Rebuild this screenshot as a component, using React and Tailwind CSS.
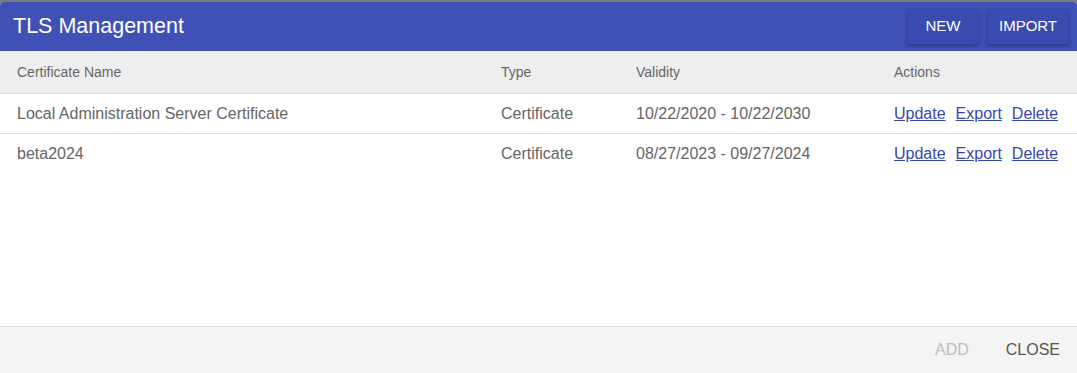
const rows = [
  { name: "Local Administration Server Certificate", type: "Certificate", validity: "10/22/2020 - 10/22/2030" },
  { name: "beta2024", type: "Certificate", validity: "08/27/2023 - 09/27/2024" },
];

function Row({ children, className = "" }) {
  return (
    <div className={`grid grid-cols-[484px_135px_258px_1fr] pl-[17px] items-center ${className}`}>
      {children}
    </div>
  );
}

export default function App() {
  return (
    <div className="h-[373px] w-[1077px] bg-[#7a7a7a] pt-[2px] font-['Liberation_Sans',Arial,sans-serif] overflow-hidden">
      <div className="flex h-[371px] flex-col rounded-t-[4px] bg-white overflow-hidden">
        <div className="flex h-[49px] items-center justify-between bg-[#3f51b5] pl-[13px] pr-[8px] shadow-[0_1px_2px_rgba(0,0,0,0.25)]">
          <h1 className="text-[21.5px] text-white">TLS Management</h1>
          <div className="flex gap-2">
            <button className="h-[35px] w-[72px] rounded-[4px] bg-[#3a4bb0] text-[15px] text-white shadow-[0_2px_4px_rgba(0,0,0,0.3)]">
              NEW
            </button>
            <button className="h-[35px] w-[82px] rounded-[4px] bg-[#3a4bb0] text-[15px] text-white shadow-[0_2px_4px_rgba(0,0,0,0.3)]">
              IMPORT
            </button>
          </div>
        </div>
        <Row className="h-[43px] border-b border-[#dddddd] bg-[#eeeeee] text-[14px] text-[#666666]">
          <div>Certificate Name</div>
          <div>Type</div>
          <div>Validity</div>
          <div>Actions</div>
        </Row>
        {rows.map((r, i) => (
          <Row
            key={r.name}
            className={`h-[40px] text-[16px] text-[#666666] ${i === 0 ? "border-b border-[#dddddd]" : ""}`}
          >
            <div>{r.name}</div>
            <div>{r.type}</div>
            <div>{r.validity}</div>
            <div className="flex gap-[10px] text-[#3949ab]">
              <a href="#" className="underline">Update</a>
              <a href="#" className="underline">Export</a>
              <a href="#" className="underline">Delete</a>
            </div>
          </Row>
        ))}
        <div className="flex-1" />
        <div className="flex h-[47px] items-center justify-end gap-[37px] border-t border-[#dddddd] bg-[#f4f4f4] pr-[17px] text-[16px]">
          <button className="text-[#bdbdbd]">ADD</button>
          <button className="text-[#555555]">CLOSE</button>
        </div>
      </div>
    </div>
  );
}
